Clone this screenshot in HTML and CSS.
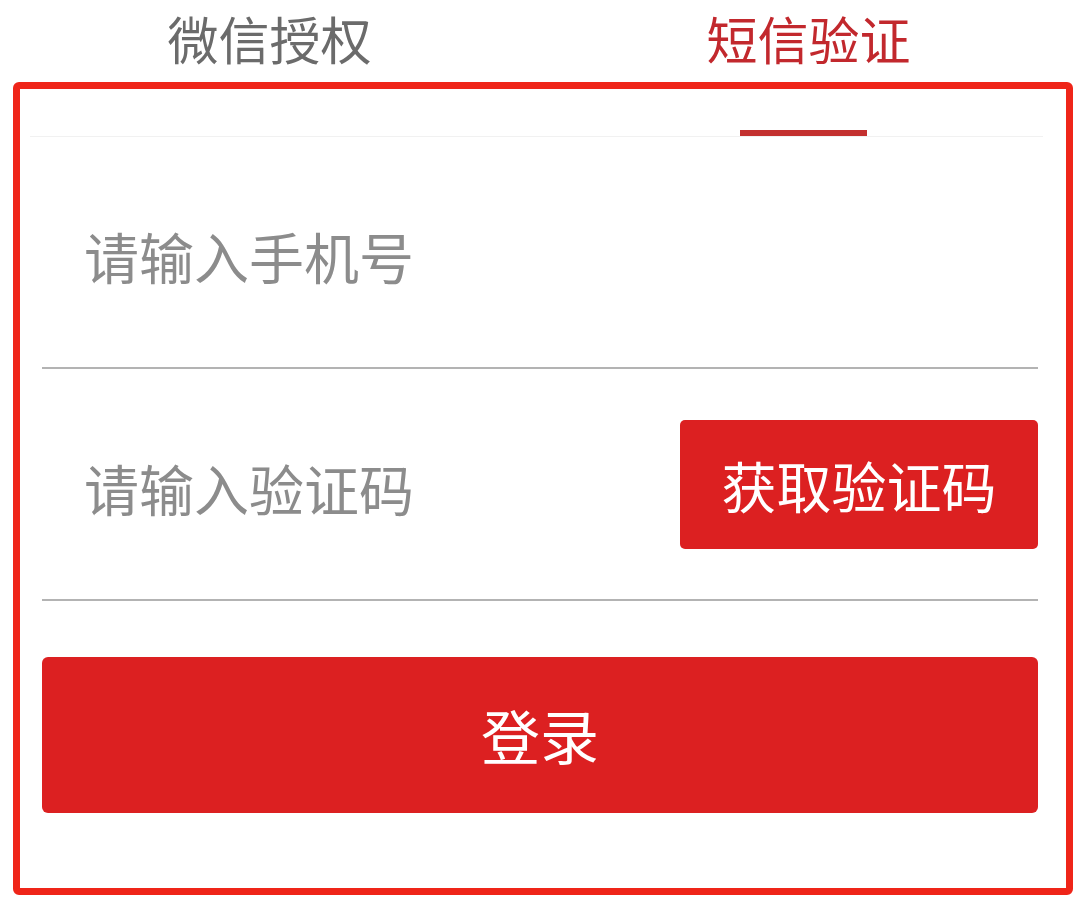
FILE: index.html
```html
<!DOCTYPE html>
<html lang="zh-CN">
<head>
  <meta charset="UTF-8" />
  <title>登录</title>
  <link rel="stylesheet" href="styles.css">
</head>
<body>
  <nav class="tabs">
    <div class="tab">微信授权</div>
    <div class="tab active">短信验证</div>
  </nav>
  <div class="tabs-line"></div>

  <!-- 短信验证登录 -->
  <form class="login-form">
    <div class="field">
      <input type="tel" placeholder="请输入手机号" />
    </div>
    <div class="field">
      <input type="text" placeholder="请输入验证码" />
      <button type="button" class="code-btn">获取验证码</button>
    </div>
    <button type="button" class="submit-btn">登录</button>
  </form>

  <!-- 标注框 -->
  <div class="mark"></div>
</body>
</html>
```

FILE: styles.css
```css
:root {
  --red: #dc2021;
  --red-text: #c2282d;
  --gray: #6b6b6b;
  --placeholder: #8c8c8c;
  --line: #b3b3b3;
  --radius: 5px;
}
* { box-sizing: border-box; margin: 0; padding: 0; }
body {
  position: relative;
  width: 1078px;
  height: 901px;
  background: #fff;
  font-family: "Noto Sans CJK SC", "Noto Sans", sans-serif;
  overflow: hidden;
}

/* 顶部标签 */
.tabs {
  display: flex;
  height: 136px;
}
.tab {
  flex: 1;
  display: flex;
  flex-direction: column;
  align-items: center;
  padding-top: 12px;
  font-size: 51px;
  line-height: 52px;
  color: var(--gray);
}
.tab.active { color: var(--red-text); }
.tab.active::after {
  content: '';
  display: block;
  margin-top: auto;
  margin-right: 10px;
  width: 127px;
  height: 6px;
  background: #c3302f;
}
.tabs-line {
  height: 1px;
  margin: 0 35px 0 30px;
  background: #f1f1f1;
}

/* 表单 */
.login-form {
  display: flex;
  flex-direction: column;
  padding: 0 40px 0 42px;
}
.field {
  display: flex;
  align-items: center;
  height: 232px;
  border-bottom: 2px solid var(--line);
}
.field input {
  flex: 1;
  min-width: 0;
  padding: 6px 0 0 42px;
  border: none;
  outline: none;
  background: transparent;
  font-family: inherit;
  font-size: 55px;
  line-height: 60px;
  color: #333;
}
.field input::placeholder { color: var(--placeholder); }

button {
  border: none;
  border-radius: var(--radius);
  background: var(--red);
  color: #fff;
  font-family: inherit;
  cursor: pointer;
}
.code-btn {
  width: 358px;
  height: 129px;
  font-size: 55px;
  line-height: 60px;
}
.submit-btn {
  height: 156px;
  margin-top: 56px;
  border-radius: 6px;
  font-size: 59px;
  line-height: 60px;
}

/* 红色标注框 */
.mark {
  position: absolute;
  left: 13px;
  top: 82px;
  width: 1060px;
  height: 813px;
  border: 7px solid #ef2519;
  border-radius: 6px;
  pointer-events: none;
}
```
